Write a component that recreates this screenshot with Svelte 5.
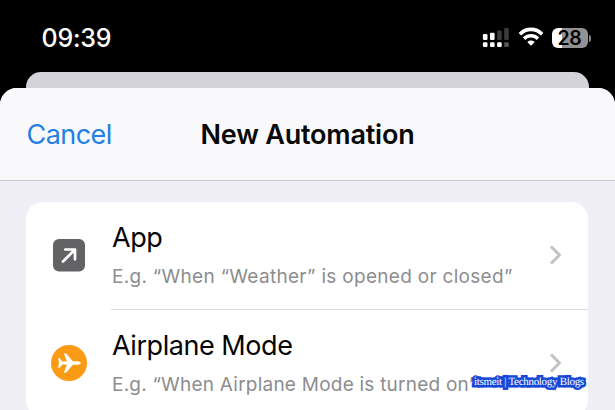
<script>
  const bars = [
    { height: 6, on: true },
    { height: 7.2, on: true },
    { height: 9.6, on: false },
    { height: 12, on: false }
  ];
  const rows = [
    { icon: 'app', title: 'App', example: 'E.g. “When “Weather” is opened or closed”' },
    { icon: 'plane', title: 'Airplane Mode', example: 'E.g. “When Airplane Mode is turned on”' }
  ];
</script>

<main class="phone">
  <div class="status">
    <span class="time">09:39</span>
    <div class="indicators">
      <svg class="signal" width="28" height="20" viewBox="0 0 28 20">
        {#each bars as bar, i}
          <rect x={0.9 + i * 7.1} y={12 - bar.height} width="4.6" height={bar.height} rx="1.2" fill={bar.on ? '#fff' : '#3b3b3b'} />
          <rect x={0.9 + i * 7.1} y="14.2" width="4.6" height="4.8" rx="1.2" fill={i < 3 ? '#fff' : '#555'} />
        {/each}
      </svg>
      <svg class="wifi" width="26" height="20" viewBox="0 0 26 20">
        <g fill="none" stroke="#fff" stroke-width="3.6">
          <path d="M1.9 7.2C8.1 .8 17.9 .8 24.1 7.2" />
          <path d="M6 11.6C10 7.7 16 7.7 20 11.6" />
        </g>
        <path d="M9.3 14.9C11.5 12.9 14.5 12.9 16.7 14.9L13.6 18.2Q13 18.8 12.4 18.2Z" fill="#fff" />
      </svg>
      <div class="battery"><span>28</span></div>
      <i class="cap"></i>
    </div>
  </div>

  <div class="behind"></div>

  <section class="sheet">
    <header>
      <button class="cancel">Cancel</button>
      <h1>New Automation</h1>
    </header>
    <div class="list">
      {#each rows as row}
        <div class="row">
          <div class="icon">
            {#if row.icon === 'app'}
              <svg width="32" height="33" viewBox="0 0 32 33">
                <rect width="32" height="32.5" rx="6" fill="#636366" />
                <path d="M10 22.5L21.5 11M12.3 10.5H22V20.3" fill="none" stroke="#fff" stroke-width="2.7" stroke-linecap="round" stroke-linejoin="round" />
              </svg>
            {:else}
              <svg width="36" height="36" viewBox="0 0 36 36">
                <circle cx="18" cy="18" r="18" fill="#fb9b14" />
                <path d="M29.8 18C29.8 16.9 28 16.2 26.3 16.2H21.8L15.8 8.9Q15.4 8.4 14.8 8.4H13.4Q12.8 8.4 13 9L15.9 16.2L11.2 16.4L8.9 13.5Q8.6 13.1 8.1 13.1H7.6Q7.1 13.1 7.2 13.7L8 18L7.2 22.3Q7.1 22.9 7.6 22.9H8.1Q8.6 22.9 8.9 22.5L11.2 19.6L15.9 19.8L13 27Q12.8 27.6 13.4 27.6H14.8Q15.4 27.6 15.8 27.1L21.8 19.8H26.3C28 19.8 29.8 19.1 29.8 18Z" fill="#fff" />
              </svg>
            {/if}
          </div>
          <div class="body">
            <div class="copy">
              <div class="title">{row.title}</div>
              <div class="example {row.icon}">{row.example}</div>
            </div>
            <svg class="chevron" width="14" height="22" viewBox="0 0 14 22">
              <path d="M2 2.5L10.5 11L2 19.5" fill="none" stroke="#c2c2c4" stroke-width="3" stroke-linejoin="round" />
            </svg>
          </div>
        </div>
      {/each}
    </div>
  </section>
  <div class="watermark">itsmeit | Technology Blogs</div>
</main>

<style>
  .phone {
    position: relative;
    width: 615px;
    height: 410px;
    overflow: hidden;
    background: #000;
    font-family: Inter, "Liberation Sans", sans-serif;
    display: flex;
    flex-direction: column;
  }
  .status {
    height: 72px;
    flex: none;
    display: flex;
    justify-content: space-between;
    box-sizing: border-box;
    padding: 0 24px 0 41.5px;
  }
  .time {
    color: #fff;
    font-size: 25px;
    font-weight: 500;
    line-height: 30px;
    margin-top: 23px;
    letter-spacing: -0.2px;
  }
  .indicators {
    display: flex;
    height: 20px;
    margin-top: 28px;
  }
  .wifi { margin: -1px 0 0 8px; }
  .battery {
    width: 36px;
    height: 20px;
    margin-left: 8px;
    border-radius: 6px;
    background: linear-gradient(90deg, #fff 10px, #929292 10px);
    text-align: center;
    font-size: 19.5px;
    line-height: 20px;
    font-weight: 600;
    letter-spacing: -0.3px;
    color: #000;
  }
  .cap {
    width: 2.5px;
    height: 7px;
    margin: 6.5px 0 0 1px;
    border-radius: 0 3px 3px 0;
    background: #858585;
  }
  .behind {
    height: 30px;
    flex: none;
    margin: 0 26px;
    border-radius: 15px 15px 0 0;
    background: #d4d3d9;
  }
  .sheet {
    height: 340px;
    flex: none;
    margin-top: -14px;
    background: #f0eff5;
    border-radius: 17px 17px 0 0;
    overflow: hidden;
  }
  header {
    height: 93px;
    box-sizing: border-box;
    border-bottom: 1px solid #c9c9cc;
    background: #f9f9fb;
    display: grid;
    grid-template-columns: 1fr auto 1fr;
    align-items: start;
    padding: 30px 27px 0;
  }
  .cancel {
    justify-self: start;
    border: 0;
    padding: 0;
    margin-left: -0.5px;
    background: none;
    font: 400 27px/34px Inter, "Liberation Sans", sans-serif;
    letter-spacing: -0.55px;
    color: #227fe4;
  }
  h1 {
    margin: 0;
    font-size: 27px;
    line-height: 34px;
    font-weight: 600;
    letter-spacing: -0.2px;
    color: #080808;
    white-space: nowrap;
  }
  .list {
    margin: 21px 27px 0 26px;
    border-radius: 17px;
    background: #fff;
    overflow: hidden;
  }
  .row {
    display: flex;
    height: 107.5px;
  }
  .icon {
    width: 85px;
    display: flex;
    align-items: center;
    justify-content: center;
  }
  .body {
    flex: 1;
    display: flex;
    align-items: center;
    justify-content: space-between;
    box-sizing: border-box;
    padding-right: 25px;
    border-bottom: 1px solid #dcdcde;
  }
  .row:last-child .body { border-bottom-color: transparent; }
  .copy {
    width: 400px;
    padding: 3px 0 0 1px;
  }
  .title {
    font-size: 27px;
    line-height: 36px;
    letter-spacing: -0.45px;
    color: #050505;
  }
  .example {
    margin-top: 5px;
    font-size: 19px;
    line-height: 32px;
    letter-spacing: 0.3px;
    color: #8d8d90;
    white-space: nowrap;
  }
  .example.plane { letter-spacing: 0.23px; }
  .chevron { flex: none; }
  .watermark {
    position: absolute;
    left: 474px;
    top: 374px;
    font: 11px/16px "Liberation Serif", serif;
    letter-spacing: -0.3px;
    color: #fff;
    white-space: nowrap;
    -webkit-text-stroke: 5px #1648d8;
    paint-order: stroke fill;
    text-rendering: geometricPrecision;
  }
</style>
